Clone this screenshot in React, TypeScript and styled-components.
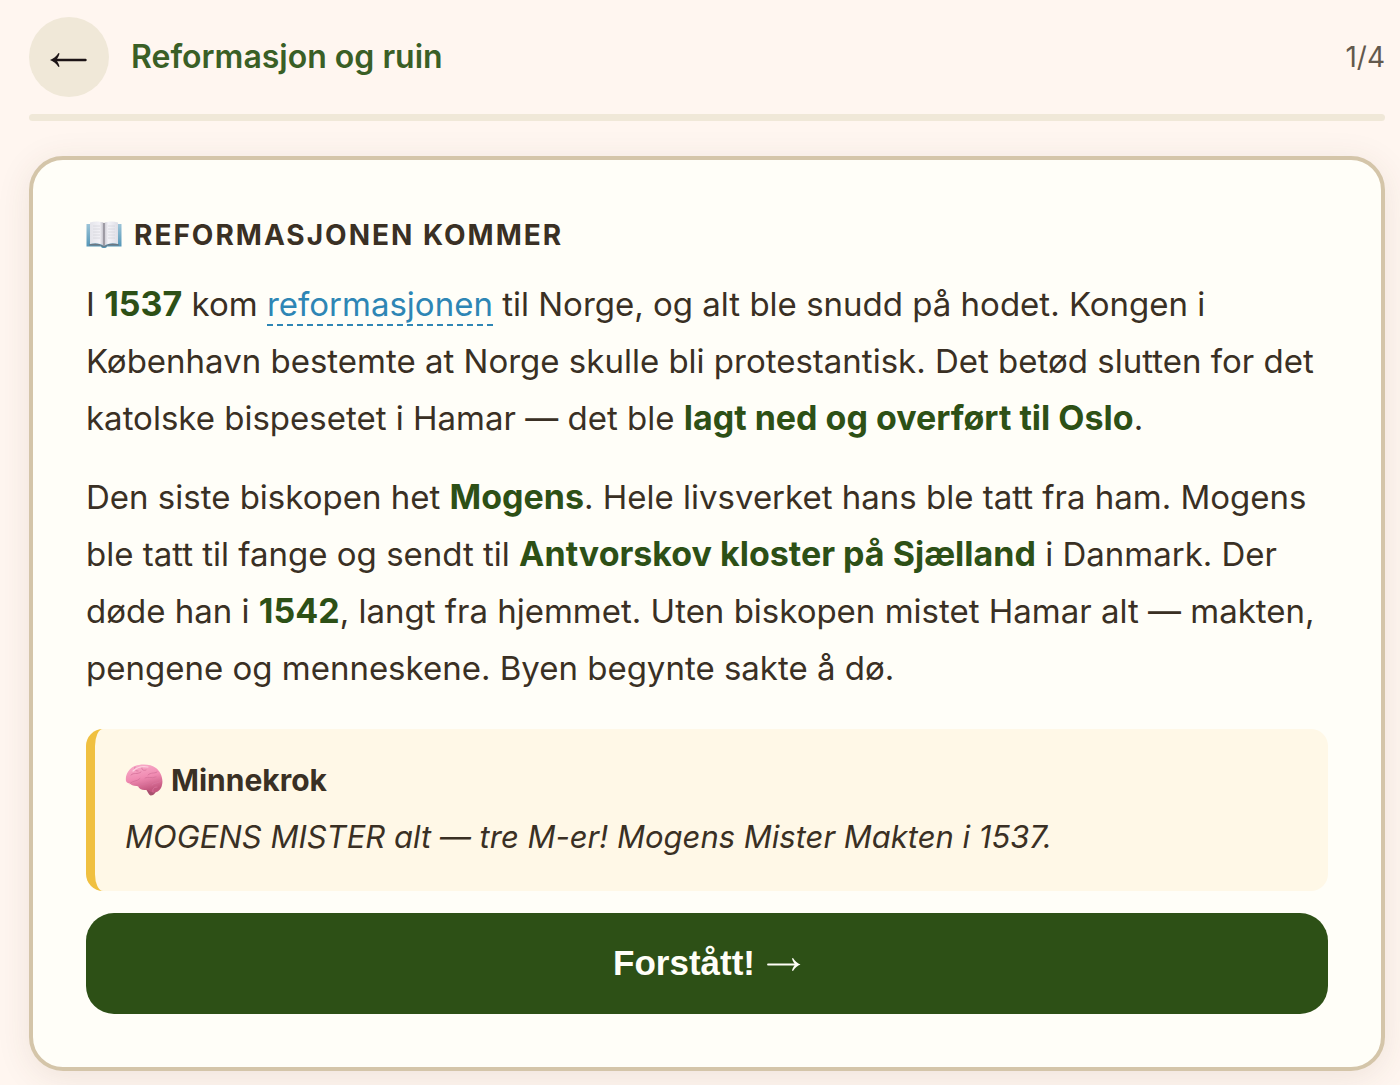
import React from "react";
import styled, { createGlobalStyle } from "styled-components";

const GlobalStyle = createGlobalStyle`
  * { box-sizing: border-box; }
  body {
    margin: 0;
    background: #fff6f0;
    color: #3a3024;
    font-family: Inter, "Liberation Sans", sans-serif;
  }
`;

const Page = styled.div`
  padding: 17px 15px 14px 29px;
`;

const Header = styled.header`
  display: flex;
  align-items: center;
  gap: 22px;
`;

const BackButton = styled.button`
  display: flex;
  align-items: center;
  justify-content: center;
  flex: none;
  width: 80px;
  height: 80px;
  padding: 6px 2px 0 0;
  border: 0;
  border-radius: 50%;
  background: #f0e8d8;
  color: #1c1416;
  cursor: pointer;
`;

const Title = styled.h1`
  flex: 1;
  margin: 0;
  font-size: 32px;
  line-height: 40px;
  font-weight: 600;
  color: #3a5f26;
`;

const Counter = styled.span`
  font-size: 28px;
  line-height: 40px;
  color: #63594d;
`;

const Track = styled.div`
  height: 7px;
  margin: 17px 0 35px;
  border-radius: 4px;
  background: #f0e8d8;
`;

const Card = styled.main`
  padding: 53px;
  border: 4px solid #d4c5a9;
  border-radius: 34px;
  background: #fffef8;
  box-shadow: 0 6px 34px rgba(90, 60, 40, 0.1);
`;

const SectionTitle = styled.h2`
  display: flex;
  align-items: center;
  gap: 12px;
  margin: 0 0 19px;
  font-size: 28px;
  line-height: 44px;
  font-weight: 700;
  letter-spacing: 2px;
  text-transform: uppercase;
`;

const Paragraph = styled.p`
  margin: 0 0 22px;
  font-size: 33px;
  line-height: 57px;
`;

const Strong = styled.strong`
  font-size: 34px;
  line-height: 40px;
  font-weight: 700;
  color: #2d5016;
`;

const Term = styled.a`
  color: #2e86b5;
  text-decoration: none;
  border-bottom: 2px dashed #2e86b5;
`;

const Note = styled.aside`
  margin: 32px 0 22px;
  padding: 28px 30px;
  border-left: 9px solid #f0c040;
  border-radius: 17px;
  background: #fff8e7;
`;

const NoteTitle = styled.h3`
  display: flex;
  align-items: center;
  gap: 8px;
  margin: 0 0 8px;
  font-size: 30px;
  line-height: 46px;
  font-weight: 700;
`;

const NoteText = styled.p`
  margin: 0;
  font-size: 31px;
  line-height: 52px;
  font-style: italic;
`;

const Confirm = styled.button`
  display: flex;
  align-items: center;
  justify-content: center;
  gap: 12px;
  width: 100%;
  padding: 27px 28px 29px;
  border: 0;
  border-radius: 28px;
  background: #2d5016;
  color: #fffef8;
  font-family: "Liberation Sans", Arial, sans-serif;
  font-size: 35px;
  line-height: 45px;
  font-weight: 700;
  cursor: pointer;

  svg {
    margin-top: 4px;
  }
`;

const ArrowLeft = () => (
  <svg width="38" height="16" viewBox="0 0 38 16" aria-hidden="true">
    <path d="M6 8H36.500" stroke="currentColor" strokeWidth="2.400" strokeLinecap="round" />
    <path d="M1 8C4.500 6.500 7.500 4.500 9.500 1L10.500 1.500C10 3.500 9 5.500 8 7V9C9 10.500 10 12.500 10.500 14.500L9.500 15C7.500 11.500 4.500 9.500 1 8Z" fill="currentColor" />
  </svg>
);

const ArrowRight = () => (
  <svg width="34" height="15" viewBox="0 0 34 15" aria-hidden="true">
    <path d="M1 7.500H29" stroke="currentColor" strokeWidth="1.800" strokeLinecap="round" />
    <path d="M33.500 7.500C30.500 6.200 28 4.200 26 1L25 1.500C25.500 3.500 26.500 5.300 27.500 6.500V8.500C26.500 9.700 25.500 11.500 25 13.500L26 14C28 10.800 30.500 8.800 33.500 7.500Z" fill="currentColor" />
  </svg>
);

const Book = () => (
  <svg width="36" height="28" viewBox="0 0 36 28" aria-hidden="true">
    <defs>
      <linearGradient id="cover" x2="0" y2="1">
        <stop offset="0" stopColor="#9cc4d8" />
        <stop offset="1" stopColor="#4f93b5" />
      </linearGradient>
      <linearGradient id="pageLeft">
        <stop offset="0" stopColor="#e4e4ea" />
        <stop offset="0.700" stopColor="#f2f1f6" />
        <stop offset="1" stopColor="#bbb9c2" />
      </linearGradient>
      <linearGradient id="pageRight">
        <stop offset="0" stopColor="#c6c4cd" />
        <stop offset="0.300" stopColor="#f4f3f8" />
        <stop offset="1" stopColor="#dedee6" />
      </linearGradient>
    </defs>
    <path d="M0.500 3H35.500V25.500H21C20.500 27.500 15.500 27.500 15 25.500H0.500Z" fill="url(#cover)" />
    <path d="M3 23.500C9 21.500 14 22.500 18 25.500C22 22.500 27 21.500 33 23.500V24.500H21C20 26.500 16 26.500 15 24.500H3Z" fill="#6d7781" />
    <path d="M4 1.500C9 0 15 0.500 18 2V25C14 22 9 21.500 4 23Z" fill="url(#pageLeft)" />
    <path d="M32 1.500C27 0 21 0.500 18 2V25C22 22 27 21.500 32 23Z" fill="url(#pageRight)" />
    <path d="M18 2V25" stroke="#8f8d96" strokeWidth="1.500" />
    <path d="M7 5H14M7 8H14M7 11H14M7 14H14M7 17H14M22 5H29M22 8H29M22 11H29M22 14H29M22 17H29" stroke="#d5d5dc" strokeWidth="0.800" />
  </svg>
);

const Brain = () => (
  <svg width="38" height="32" viewBox="0 0 38 32" aria-hidden="true">
    <defs>
      <linearGradient id="lobe" x2="0.300" y2="1">
        <stop offset="0" stopColor="#f9b2cd" />
        <stop offset="0.550" stopColor="#f08bb2" />
        <stop offset="1" stopColor="#c4577f" />
      </linearGradient>
    </defs>
    <path d="M21 25L27 24L31 27C30 30 28 31.500 25.500 31.500C23.500 30.500 22.500 27.500 21 25Z" fill="#a8506e" />
    <path d="M1 17C0 11 4 4 10 2C16 -0.500 26 0 31 4C36 8 38.500 15 37 21C36 26 32 29 28 28.500C25 28 24 26 21 26C17 26.500 14 25 13 22C9 22.500 6 21 5 19.500C3 19.500 1.500 18.500 1 17Z" fill="url(#lobe)" />
    <path d="M13 22C16 19.500 21 21 25 17.500M5 19.500C8 16 12 18 15 14.500M6 11C9 8 12 11 16 8M17 3C16 6 19 7 21 6M23 11C26 8 29 10 32 8M20 14C23 12 26 15 31 13M27 21C29 18 33 20 36 17M10 3C9 6 11 7 13 7M28 28C27 25 29 23 32 23" fill="none" stroke="#d8749c" strokeWidth="0.900" strokeLinecap="round" />
    <path d="M8 7C12 3 18 2 23 3" fill="none" stroke="#fdd0df" strokeWidth="1.200" strokeLinecap="round" />
  </svg>
);

export default function App() {
  return (
    <>
      <GlobalStyle />
      <Page>
        <Header>
          <BackButton type="button" aria-label="Tilbake">
            <ArrowLeft />
          </BackButton>
          <Title>Reformasjon og ruin</Title>
          <Counter>1/4</Counter>
        </Header>
        <Track />
        <Card>
          <SectionTitle>
            <Book />
            Reformasjonen kommer
          </SectionTitle>
          <Paragraph>
            I <Strong>1537</Strong> kom <Term href="#reformasjonen">reformasjonen</Term> til
            Norge, og alt ble snudd på hodet. Kongen i København bestemte at Norge skulle bli
            protestantisk. Det betød slutten for det katolske bispesetet i Hamar — det
            ble <Strong>lagt ned og overført til Oslo</Strong>.
          </Paragraph>
          <Paragraph>
            Den siste biskopen het <Strong>Mogens</Strong>. Hele livsverket hans ble tatt fra
            ham. Mogens ble tatt til fange og sendt
            til <Strong>Antvorskov kloster på Sjælland</Strong> i Danmark. Der døde han
            i <Strong>1542</Strong>, langt fra hjemmet. Uten biskopen mistet Hamar alt —
            makten, pengene og menneskene. Byen begynte sakte å dø.
          </Paragraph>
          <Note>
            <NoteTitle>
              <Brain />
              Minnekrok
            </NoteTitle>
            <NoteText>MOGENS MISTER alt — tre M-er! Mogens Mister Makten i 1537.</NoteText>
          </Note>
          <Confirm type="button">
            Forstått!
            <ArrowRight />
          </Confirm>
        </Card>
      </Page>
    </>
  );
}
